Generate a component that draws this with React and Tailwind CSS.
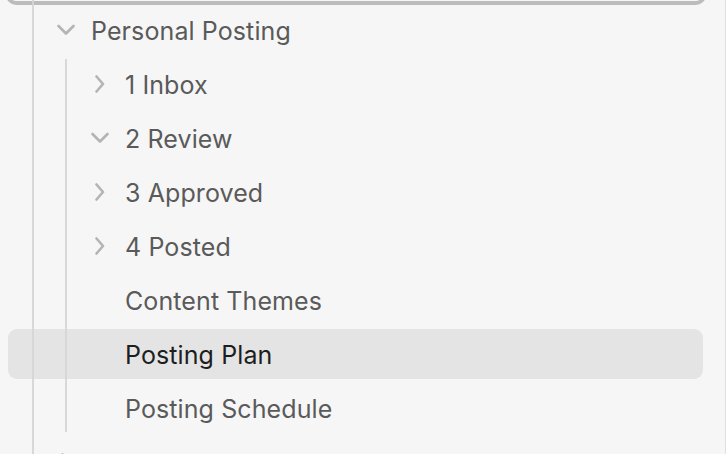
import React from "react";

const ChevDown = () => (
  <svg width="18" height="18" viewBox="0 0 18 18" fill="none">
    <polyline points="1.5,5 9,12.5 16.5,5" stroke="#b4b4b4" strokeWidth="2.6" strokeLinecap="round" strokeLinejoin="round" />
  </svg>
);
const ChevRight = () => (
  <svg width="18" height="18" viewBox="0 0 18 18" fill="none">
    <polyline points="5.5,1.5 12,9 5.5,16.5" stroke="#b4b4b4" strokeWidth="2.6" strokeLinecap="round" strokeLinejoin="round" />
  </svg>
);

function Row({ level, chevron, label, selected }) {
  const pad = level === 1 ? "pl-[46px]" : "pl-[80px]";
  return (
    <div className={`flex items-center h-[50px] ml-[8px] mr-[22px] rounded-[9px] ${pad} ${selected ? "bg-[#e4e4e4]" : ""}`}>
      <div className="w-[24px] h-[24px] flex items-center justify-center shrink-0">
        {chevron === "down" && <ChevDown />}
        {chevron === "right" && <ChevRight />}
      </div>
      {label && (
        <span className={`ml-[13px] pt-[3px] text-[25px] leading-none tracking-[0.1px] ${selected ? "text-[#1e1e1e]" : "text-[#5a5a5a]"}`}>
          {label}
        </span>
      )}
    </div>
  );
}

export default function App() {
  return (
    <div
      className="relative w-[726px] h-[454px] bg-[#f6f6f6] overflow-hidden border-r border-[#e0e0e0]"
      style={{ fontFamily: "Inter, 'Noto Sans', sans-serif" }}
    >
      <div className="absolute top-[-45px] left-[6px] w-[700px] h-[50px] rounded-[10px] border-[4px] border-[#bcbcbc]" />
      <div className="pt-[5px] flex flex-col gap-[4px]">
        <Row level={1} chevron="down" label="Personal Posting" />
        <Row level={2} chevron="right" label="1 Inbox" />
        <Row level={2} chevron="down" label="2 Review" />
        <Row level={2} chevron="right" label="3 Approved" />
        <Row level={2} chevron="right" label="4 Posted" />
        <Row level={2} label="Content Themes" />
        <Row level={2} label="Posting Plan" selected />
        <Row level={2} label="Posting Schedule" />
        <Row level={1} chevron="right" />
      </div>
      <div className="absolute top-0 bottom-0 left-[32px] w-[2px] bg-[#d5d5d5] opacity-90" />
      <div className="absolute top-[59px] h-[373px] left-[65px] w-[2px] bg-[#d5d5d5] opacity-90" />
    </div>
  );
}
